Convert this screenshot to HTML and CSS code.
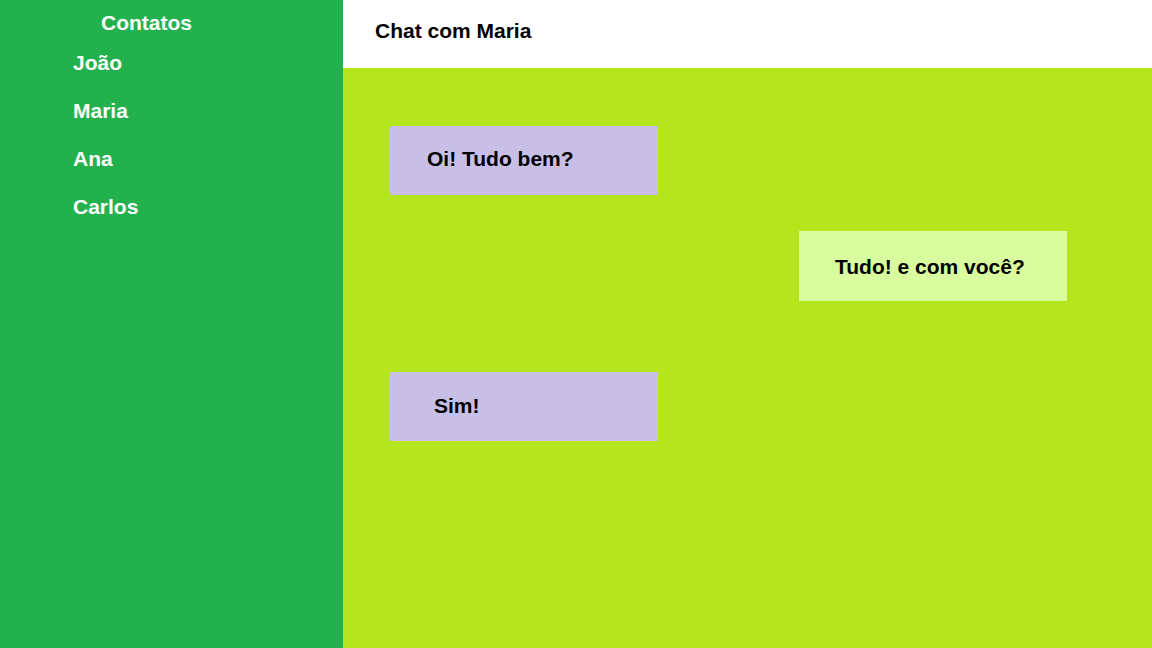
FILE: index.html
```html
<!DOCTYPE html>
<html lang="pt">
<head>
<meta charset="utf-8">
<title>Chat</title>
<link rel="stylesheet" href="styles.css">
</head>
<body>
<div class="app">
  <aside class="sidebar">
    <h2 class="sidebar-title">Contatos</h2>
    <ul class="contacts">
      <li class="contact">João</li>
      <li class="contact">Maria</li>
      <li class="contact">Ana</li>
      <li class="contact">Carlos</li>
    </ul>
  </aside>
  <main class="chat">
    <header class="chat-header">Chat com Maria</header>
    <section class="messages">
      <div class="msg msg-in msg-first">Oi! Tudo bem?</div>
      <div class="msg msg-out">Tudo! e com você?</div>
      <div class="msg msg-in msg-short">Sim!</div>
    </section>
  </main>
</div>
</body>
</html>
```

FILE: styles.css
```css
* { box-sizing: border-box; }
html, body { margin: 0; padding: 0; height: 100%; }
body {
  font-family: "Liberation Sans", Arial, sans-serif;
  font-size: 21px;
  font-weight: bold;
}
.app {
  display: flex;
  width: 1152px;
  height: 648px;
}
.sidebar {
  width: 343px;
  flex: none;
  background: #22b14c;
  color: #ffffff;
}
.sidebar-title {
  margin: 0;
  padding: 11px 0 0 101px;
  font-size: 21px;
  font-weight: bold;
  line-height: 24px;
}
.contacts {
  list-style: none;
  margin: 4px 0 0 0;
  padding: 0 0 0 73px;
}
.contact {
  line-height: 48px;
  height: 48px;
}
.chat {
  flex: 1;
  display: flex;
  flex-direction: column;
  background: #b5e61d;
}
.chat-header {
  height: 68px;
  background: #ffffff;
  color: #000000;
  padding: 19px 0 0 32px;
  line-height: 24px;
}
.messages {
  display: flex;
  flex-direction: column;
  padding: 58px 85px 0 47px;
}
.msg {
  width: 268px;
  height: 69px;
  color: #000000;
  line-height: 24px;
  padding: 21px 0 0 37px;
}
.msg-in {
  align-self: flex-start;
  background: #c8bfe7;
}
.msg-out {
  align-self: flex-end;
  background: #d9fd9e;
  height: 70px;
  margin-top: 36px;
  padding-top: 24px;
  padding-left: 36px;
}
.msg-short {
  margin-top: 71px;
  padding-left: 44px;
  padding-top: 22px;
}
```
